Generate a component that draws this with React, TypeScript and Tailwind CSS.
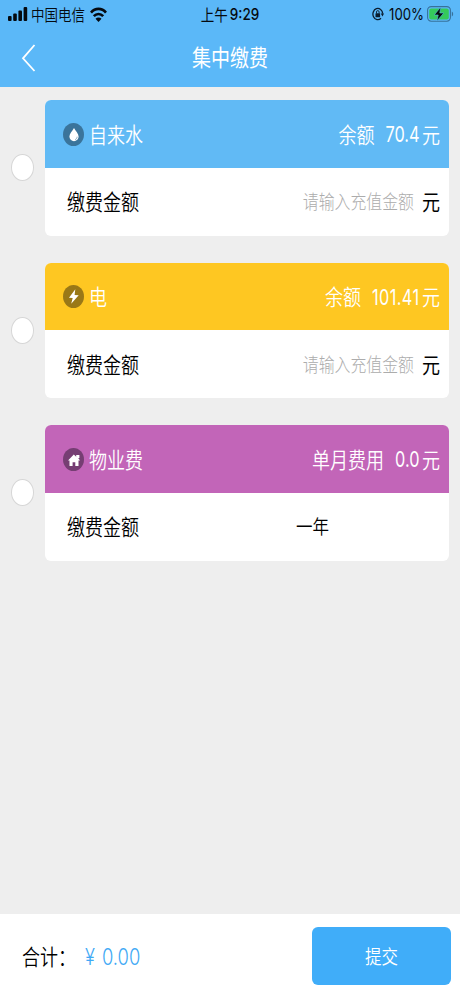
import type { ReactNode } from "react";

const cjk = "font-['Noto_Sans_CJK_SC','Noto_Sans',sans-serif]";
const num = "font-['Inter','Noto_Sans_CJK_SC',sans-serif]";

interface TextProps {
  size?: string;
  className?: string;
  children: ReactNode;
}

function Label({ size = "text-[18px]", className = "", children }: TextProps) {
  return (
    <span className={`${cjk} ${size} -mt-px inline-block shrink-0 scale-y-[1.18] whitespace-nowrap leading-[24px] ${className}`}>
      {children}
    </span>
  );
}

function Amount({ size = "scale-y-[1.34] text-[16.3px]", className = "", children }: TextProps) {
  return (
    <span className={`${num} ${size} inline-block shrink-0 whitespace-nowrap leading-[24px] ${className}`}>
      {children}
    </span>
  );
}

function Signal() {
  return (
    <svg width="20" height="14" viewBox="0 0 20 14" fill="#050a10">
      <rect x="0" y="9" width="3.6" height="5" rx="1" />
      <rect x="5.2" y="6.6" width="3.6" height="7.4" rx="1" />
      <rect x="10.4" y="3.6" width="3.6" height="10.4" rx="1" />
      <rect x="15.6" y="0" width="3.6" height="14" rx="1" />
    </svg>
  );
}

function Wifi() {
  return (
    <svg width="17" height="15" viewBox="0 0 17 15" fill="none" stroke="#050a10" strokeWidth="2.6">
      <path d="M1 5.6C5.2.6 11.8.6 16 5.6" />
      <path d="M3.8 9.2c2.7-3 6.7-3 9.4 0" />
      <path d="M8.5 15 5.5 11.7c1.7-1.6 4.3-1.6 6 0z" fill="#050a10" stroke="none" />
    </svg>
  );
}

function RotationLock() {
  return (
    <svg width="12" height="14" viewBox="0 0 12 14" fill="none" stroke="#0a1c2e">
      <path d="M9 11.3A4.9 5.6 0 1 1 10.7 6.6" strokeWidth="1.3" />
      <path d="M8.8 6.4H12L10.5 9.6z" fill="#0a1c2e" stroke="none" />
      <rect x="3.5" y="6.2" width="4.6" height="4" rx=".5" fill="#0a1c2e" stroke="none" />
      <path d="M4.5 6.4V5a1.3 1.4 0 0 1 2.6 0v1.4" strokeWidth=".9" />
    </svg>
  );
}

function Battery() {
  return (
    <svg width="27" height="16" viewBox="0 0 27 16">
      <rect x=".6" y=".6" width="22.8" height="14.6" rx="3.6" fill="none" stroke="#37719b" strokeWidth="1.1" />
      <rect x="2.2" y="2.4" width="19.6" height="11" rx="2" fill="#35ca5b" />
      <path d="M24.8 5.4v5c1.8-.7 1.8-4.3 0-5z" fill="#37719b" />
      <path d="M13.8 1 7.2 9h4l-1.3 6L16.8 7h-4z" fill="#061008" stroke="#5ab8f4" strokeWidth=".6" />
    </svg>
  );
}

function DropIcon() {
  return (
    <svg width="21" height="23" viewBox="0 0 21 23">
      <ellipse cx="10.5" cy="11.5" rx="10.5" ry="11.5" fill="#3a749b" />
      <path d="M11 5c1.6 2.9 4.6 5.9 4.6 8.6 0 2.7-2.1 4.6-4.6 4.6s-4.6-1.9-4.6-4.6C6.4 10.9 9.4 7.9 11 5z" fill="#fff" />
      <path d="M14.1 13.7c0 1.6-.8 2.5-2 2.9" fill="none" stroke="#6b98b5" strokeWidth=".8" />
    </svg>
  );
}

function BoltIcon() {
  return (
    <svg width="21" height="23" viewBox="0 0 21 23">
      <ellipse cx="10.5" cy="11.5" rx="10.5" ry="11.5" fill="#997817" />
      <path d="M12.3 4.3 6 12.8l3.7.2-1.5 5.7 7.5-8.5-4.1-.3z" fill="#fff" />
    </svg>
  );
}

function HouseIcon() {
  return (
    <svg width="21" height="23" viewBox="0 0 21 23">
      <ellipse cx="10.5" cy="11.5" rx="10.5" ry="11.5" fill="#763e73" />
      <path d="M5 12.6 10.8 6.6l2.4 2.2V7h3.2v3h-1.2l1.8 2.6h-1.5v5.3h-3.2v-3.6H9.6v3.6H6.5v-5.3z" fill="#fff" />
    </svg>
  );
}

interface Bill {
  name: string;
  icon: ReactNode;
  color: string;
  caption: string;
  value: string;
  input: boolean;
}

const bills: Bill[] = [
  { name: "自来水", icon: <DropIcon />, color: "bg-[#61baf5]", caption: "余额", value: "70.4", input: true },
  { name: "电", icon: <BoltIcon />, color: "bg-[#fec722]", caption: "余额", value: "101.41", input: true },
  { name: "物业费", icon: <HouseIcon />, color: "bg-[#c265b8]", caption: "单月费用", value: "0.0", input: false },
];

function BillRow({ bill }: { bill: Bill }) {
  return (
    <div className="flex h-[135.5px] items-center px-[11px]">
      <span className="h-[27px] w-[22.5px] shrink-0 rounded-[50%] border border-[#d6d6d6] bg-white" />
      <div className="ml-[11px] h-full flex-1 overflow-hidden rounded-[6px] bg-white">
        <div className={`flex h-[67.5px] items-center pt-px pr-[9px] pl-[18.5px] text-white ${bill.color}`}>
          {bill.icon}
          <Label className="ml-[5px] font-[350]">{bill.name}</Label>
          <Label className="mr-[11px] ml-auto font-[350]">{bill.caption}</Label>
          <Amount className={bill.value.length > 4 ? "tracking-[0.4px]" : ""}>{bill.value}</Amount>
          <Label className="ml-[2.5px] font-[350]">元</Label>
        </div>
        <div className="flex h-[68px] items-center pr-[9px] pl-[22.5px] text-black">
          <Label className="font-[350]">缴费金额</Label>
          {bill.input ? (
            <>
              <Label size="text-[15.9px]" className="mt-px mr-[8px] ml-auto font-light text-[#acacac]">请输入充值金额</Label>
              <Label>元</Label>
            </>
          ) : (
            <Label size="text-[16.5px]" className="ml-[157px] font-[350]">一年</Label>
          )}
        </div>
      </div>
    </div>
  );
}

export default function App() {
  return (
    <div className="flex h-[996px] w-[460px] flex-col overflow-hidden bg-[#eeeeee]">
      <header className="h-[87px] shrink-0 bg-[#5bb8f8]">
        <div className="grid h-[28px] grid-cols-3 items-center pr-[6px] pl-[8px] text-[#050a10]">
          <div className="flex items-center">
            <Signal />
            <Label size="text-[13.5px]" className="ml-[3px] font-[350]">中国电信</Label>
            <span className="ml-[5px]"><Wifi /></span>
          </div>
          <div className="flex items-center justify-center pr-[2px]">
            <Label size="text-[13.5px]">上午</Label>
            <Amount size="scale-y-[1.18] text-[13.5px]" className="ml-[2px] font-medium">9:29</Amount>
          </div>
          <div className="flex items-center justify-end">
            <RotationLock />
            <Amount size="scale-y-[1.24] text-[13.2px]" className="mr-[3px] ml-[5px]">100%</Amount>
            <Battery />
          </div>
        </div>
        <div className="grid h-[59px] grid-cols-[1fr_auto_1fr] items-center px-[21px]">
          <svg width="15" height="28" viewBox="0 0 15 28" fill="none" stroke="#fff" strokeWidth="1.8">
            <path d="M13.5 1 2 14.3 13.5 27" />
          </svg>
          <Label size="text-[19px]" className="text-white">集中缴费</Label>
          <span />
        </div>
      </header>
      <main className="flex flex-1 flex-col gap-[27px] pt-[13px]">
        {bills.map((bill) => (
          <BillRow key={bill.name} bill={bill} />
        ))}
      </main>
      <footer className="flex h-[82px] shrink-0 items-center bg-white pt-[2px] pr-[9px] pl-[22px]">
        <Label className="font-[350] text-black">合计：</Label>
        <Amount size="scale-y-[1.22] text-[18.4px]" className="ml-[9px] font-[350] text-[#3fa9f5]">
          ¥<span className="ml-[7px]">0.00</span>
        </Amount>
        <button className="ml-auto flex h-[58px] w-[139px] items-center justify-center rounded-[6px] bg-[#40adf9] text-white">
          <Label size="text-[16.5px]" className="font-[350]">提交</Label>
        </button>
      </footer>
    </div>
  );
}
